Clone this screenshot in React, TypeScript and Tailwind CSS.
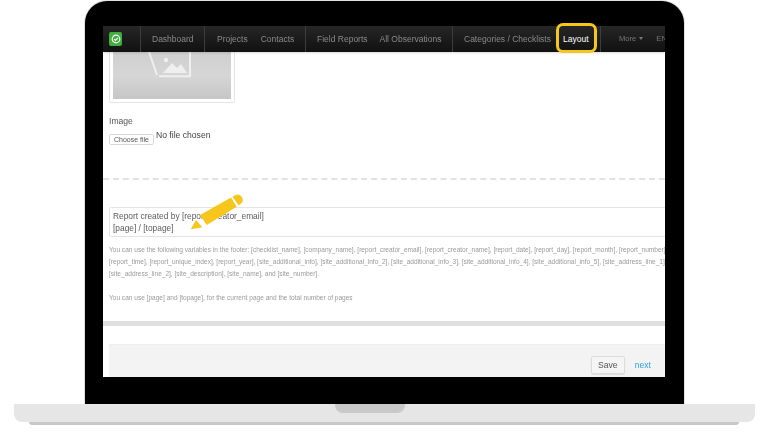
const navGroups = [
  { items: ["Dashboard"], width: "w-[64px]", gap: "gap-0", pad: "pl-[11px]" },
  { items: ["Projects", "Contacts"], width: "w-[101px]", gap: "gap-[13px]", pad: "pl-[12px]" },
  { items: ["Field Reports", "All Observations"], width: "w-[147px]", gap: "gap-[12px]", pad: "pl-[11px]" },
];

const helpLines = [
  "You can use the following variables in the footer: [checklist_name], [company_name], [report_creator_email], [report_creator_name], [report_date], [report_day], [report_month], [report_number],",
  "[report_time], [report_unique_index], [report_year], [site_additional_info], [site_additional_info_2], [site_additional_info_3], [site_additional_info_4], [site_additional_info_5], [site_address_line_1],",
  "[site_address_line_2], [site_description], [site_name], and [site_number].",
];

function Logo() {
  return (
    <div className="w-[13px] h-[14px] rounded-[2px] bg-[#3fae3c] flex items-center justify-center shrink-0">
      <svg width="10" height="10" viewBox="0 0 10 10" fill="none" stroke="#fff" strokeWidth="1.2">
        <circle cx="5" cy="5" r="3.8" />
        <path d="M3.2 5.1 4.5 6.3 6.9 3.8" />
      </svg>
    </div>
  );
}

function Pencil() {
  return (
    <svg className="absolute left-[84px] top-[166px] z-20" width="60" height="40" viewBox="0 0 60 40" fill="#f6c61c">
      <path d="M3.7 37.3 9 28 15.3 35.3Z" />
      <path d="M13 23 44 5.5 49.7 14.7 19.7 33Z" />
      <path d="M45.5 4.8 48 3.2A5.2 5.2 0 0 1 54.2 11.4L51.5 13.2Z" />
    </svg>
  );
}

export default function App() {
  return (
    <div className="w-[768px] h-[432px] overflow-hidden bg-white flex flex-col items-center pt-[1px] font-['Liberation_Sans',Arial,sans-serif]">
      {/* Laptop lid */}
      <div className="w-[599px] h-[403px] shrink-0 ml-[1px] bg-black rounded-t-[22px] shadow-[0_0_0_1px_#e2e2e2] pt-[25px] pl-[18px] pr-[19px] pb-[27px]">
        <div className="relative h-full bg-white flex flex-col">
          {/* Nav */}
          <nav className="h-[26px] shrink-0 bg-gradient-to-b from-[#262626] to-[#111111] flex items-center text-[8.5px] text-[#8a8a8a] whitespace-nowrap overflow-hidden relative z-10 shadow-[0_1px_2px_rgba(0,0,0,0.15)]">
            <div className="w-[38px] h-full shrink-0 flex items-center pl-[6px] border-r border-[#3d3d3d]">
              <Logo />
            </div>
            {navGroups.map((group) => (
              <div key={group.items[0]} className={`${group.width} ${group.gap} ${group.pad} h-full shrink-0 flex items-center border-r border-[#3d3d3d] blur-[0.3px]`}>
                {group.items.map((item) => (
                  <span key={item}>{item}</span>
                ))}
              </div>
            ))}
            <div className="w-[102px] h-full shrink-0 flex items-center pl-[11px] blur-[0.3px]">Categories / Checklists</div>
            <div className="w-[46px] h-full shrink-0 flex items-center pl-[8px] text-white border-r border-[#3d3d3d]">Layout</div>
            <div className="flex items-center pl-[18px] text-[7.6px] text-[#777777] blur-[0.3px]">
              <span>More</span>
              <span className="ml-[3px] border-x-[2.5px] border-t-[3px] border-x-transparent border-t-[#777777]" />
              <span className="ml-[13px]">EN</span>
            </div>
          </nav>

          {/* Form */}
          <div className="flex-1 min-h-0 overflow-hidden flex flex-col text-[#555555]">
            <div className="pl-[6px]">
              <div className="w-[126px] h-[51px] p-[3px] pt-0 border border-t-0 border-[#e3e3e3] rounded-b-[2px]">
                <div className="h-full bg-gradient-to-b from-[#cfcfcf] via-[#d6d6d6] to-[#c6c6c6] flex justify-center overflow-hidden">
                  <svg width="44" height="26" viewBox="0 0 44 26" fill="none" className="-ml-[4px]">
                    <path d="M1 0 9 23M11 24.2H42V0" stroke="#efefef" strokeWidth="2" />
                    <path d="M15 21 24 11 29 16 33 12 39 21Z" fill="#efefef" />
                    <circle cx="18" cy="8" r="2.2" fill="#efefef" />
                  </svg>
                </div>
              </div>
            </div>

            <div className="pl-[6px] mt-[13px] text-[8.6px] leading-[10px] blur-[0.3px]">Image</div>
            <div className="pl-[6px] mt-[4px] flex items-start">
              <button className="w-[45px] h-[11px] mt-[4px] bg-white border border-[#d8d8d8] rounded-[2px] text-[7px] leading-[9px] text-[#555555] blur-[0.2px]">
                Choose file
              </button>
              <span className="ml-[2px] text-[8.6px] leading-[10px] text-[#444444] blur-[0.3px]">No file chosen</span>
            </div>

            <div className="mt-[33px] border-t-2 border-dashed border-[#e2e2e2]" />

            {/* Footer text */}
            <div className="ml-[6px] -mr-[6px] mt-[27px] h-[30px] shrink-0 border border-[#e4e4e4] rounded-[2px] pl-[3px] pt-[3px] text-[8.4px] leading-[11.5px] text-[#5c5c5c] whitespace-nowrap">
              <div className="blur-[0.3px]">Report created by [report_creator_email]</div>
              <div className="blur-[0.3px]">[page] / [topage]</div>
            </div>

            <div className="pl-[6px] mt-[7px] text-[6.55px] leading-[12px] text-[#9a9a9a] whitespace-nowrap overflow-hidden blur-[0.3px]">
              {helpLines.map((line) => (
                <div key={line}>{line}</div>
              ))}
              <div className="mt-[12px]">You can use [page] and [topage], for the current page and the total number of pages</div>
            </div>

            <div className="mt-[17px] h-[5px] shrink-0 bg-[#dfdfdf]" />

            <div className="ml-[6px] mt-[18px] flex-1 bg-[#f3f3f3] border-t border-[#eeeeee] flex items-start justify-end pr-[14px] pt-[11px]">
              <button className="w-[34px] h-[18px] bg-[#f5f5f5] border border-[#dcdcdc] rounded-[2px] shadow-[0_1px_1px_rgba(0,0,0,0.08)] text-[8.6px] text-[#555555] blur-[0.2px]">
                Save
              </button>
              <span className="ml-[10px] mt-[4px] text-[8.6px] leading-[11px] text-[#2f9fe0] blur-[0.2px]">next</span>
            </div>
          </div>

          {/* Highlight round the Layout item */}
          <div className="absolute left-[453px] -top-[3px] w-[41px] h-[30px] z-20 rounded-[7px] border-[3px] border-[#f6c61c]" />
          <Pencil />
        </div>
      </div>

      {/* Laptop base */}
      <div className="w-[741px] h-[18px] shrink-0 ml-[1px] bg-[#e6e6e6] rounded-b-[8px] flex pl-[321px]">
        <div className="w-[70px] h-[9px] bg-[#c9c9c9] rounded-b-[8px]" />
      </div>
      <div className="w-[710px] h-[3px] shrink-0 bg-[#c9c9c9] rounded-b-[3px]" />
    </div>
  );
}
